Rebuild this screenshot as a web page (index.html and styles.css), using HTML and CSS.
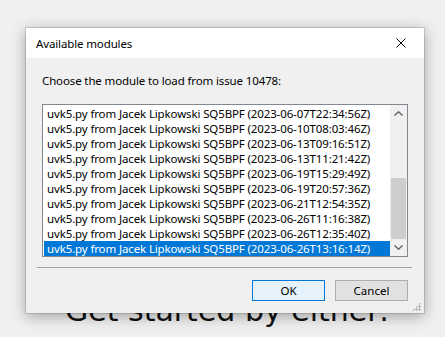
FILE: index.html
```html
<!DOCTYPE html>
<html lang="en">
<head>
    <meta charset="UTF-8">
    <title>Available modules</title>
    <link rel="stylesheet" href="styles.css">
</head>
<body>
    <div class="page">
        <p class="intro">Get started by either:</p>
    </div>

    <div class="dialog">
        <div class="titlebar">
            <span class="title">Available modules</span>
            <button class="close" aria-label="Close">
                <svg width="10" height="10" viewBox="0 0 10 10">
                    <path d="M0.5 0.5 L9.5 9.5 M9.5 0.5 L0.5 9.5" stroke="#000" stroke-width="1" fill="none"/>
                </svg>
            </button>
        </div>
        <div class="dialog-body">
            <p class="prompt">Choose the module to load from issue 10478:</p>
            <div class="listbox">
                <ul class="items">
                    <li>uvk5.py from Jacek Lipkowski SQ5BPF (2023-06-07T22:34:56Z)</li>
                    <li>uvk5.py from Jacek Lipkowski SQ5BPF (2023-06-10T08:03:46Z)</li>
                    <li>uvk5.py from Jacek Lipkowski SQ5BPF (2023-06-13T09:16:51Z)</li>
                    <li>uvk5.py from Jacek Lipkowski SQ5BPF (2023-06-13T11:21:42Z)</li>
                    <li>uvk5.py from Jacek Lipkowski SQ5BPF (2023-06-19T15:29:49Z)</li>
                    <li>uvk5.py from Jacek Lipkowski SQ5BPF (2023-06-19T20:57:36Z)</li>
                    <li>uvk5.py from Jacek Lipkowski SQ5BPF (2023-06-21T12:54:35Z)</li>
                    <li>uvk5.py from Jacek Lipkowski SQ5BPF (2023-06-26T11:16:38Z)</li>
                    <li>uvk5.py from Jacek Lipkowski SQ5BPF (2023-06-26T12:35:40Z)</li>
                    <li class="selected">uvk5.py from Jacek Lipkowski SQ5BPF (2023-06-26T13:16:14Z)</li>
                </ul>
                <div class="scrollbar">
                    <div class="arrow">
                        <svg width="9" height="5" viewBox="0 0 9 5">
                            <path d="M0.5 4.5 L4.5 0.8 L8.5 4.5" stroke="#606060" stroke-width="1.4" fill="none"/>
                        </svg>
                    </div>
                    <div class="track">
                        <div class="thumb"></div>
                    </div>
                    <div class="arrow">
                        <svg width="9" height="5" viewBox="0 0 9 5">
                            <path d="M0.5 0.5 L4.5 4.2 L8.5 0.5" stroke="#606060" stroke-width="1.4" fill="none"/>
                        </svg>
                    </div>
                </div>
            </div>
            <div class="separator"></div>
            <div class="buttons">
                <button class="btn default">OK</button>
                <button class="btn">Cancel</button>
            </div>
            <div class="grip"></div>
        </div>
    </div>
</body>
</html>
```

FILE: styles.css
```css
body {
    margin: 0;
    width: 445px;
    height: 337px;
    overflow: hidden;
    background: #f0f0f0;
    font-family: 'Noto Sans', sans-serif;
}
.page {
    padding-top: 302px;
    padding-left: 65px;
}
.intro {
    margin: 0;
    font-family: 'DejaVu Sans', sans-serif;
    font-size: 30px;
    line-height: 18px;
    color: #111;
}
.dialog {
    position: absolute;
    left: 26px;
    top: 28px;
    width: 398px;
    height: 285px;
    display: flex;
    flex-direction: column;
    background: #f0f0f0;
    box-shadow: 0 3px 14px rgba(0, 0, 0, 0.35), 0 0 0 1px rgba(0, 0, 0, 0.12);
}
.titlebar {
    height: 30px;
    background: #fff;
    display: flex;
    align-items: center;
    justify-content: space-between;
    padding-left: 10px;
}
.title {
    font-size: 11.5px;
    letter-spacing: -0.13px;
    color: #000;
}
.close {
    width: 46px;
    height: 30px;
    border: none;
    background: none;
    padding: 0;
    display: flex;
    align-items: center;
    justify-content: center;
}
.dialog-body {
    flex: 1;
    position: relative;
    padding: 15px 11px 0 16px;
}
.prompt {
    margin: 0;
    font-size: 11.5px;
    letter-spacing: -0.13px;
    line-height: 15px;
    color: #000;
}
.listbox {
    margin-top: 16px;
    width: 364px;
    height: 151px;
    border: 1px solid #828790;
    background: #fff;
    display: flex;
}
.items {
    list-style: none;
    margin: 0;
    padding: 1px 0 0 1px;
    flex: 1;
}
.items li {
    height: 15px;
    line-height: 15px;
    font-size: 11.5px;
    letter-spacing: -0.13px;
    padding-left: 3px;
    color: #000;
    white-space: nowrap;
    overflow: hidden;
}
.items li.selected {
    background: #0078d7;
    color: #fff;
}
.scrollbar {
    width: 17px;
    background: #f0f0f0;
    display: flex;
    flex-direction: column;
}
.arrow {
    height: 17px;
    display: flex;
    align-items: center;
    justify-content: center;
}
.track {
    flex: 1;
    display: flex;
    flex-direction: column;
    justify-content: flex-end;
    padding: 0 1px;
}
.thumb {
    height: 61px;
    background: #cdcdcd;
}
.separator {
    margin: 10px 0 0 -5px;
    width: 375px;
    height: 1px;
    background: #a0a0a0;
}
.buttons {
    display: flex;
    justify-content: flex-end;
    gap: 10px;
    margin-top: 12px;
    padding-right: 5px;
}
.btn {
    width: 73px;
    height: 21px;
    padding: 0;
    font-family: 'Noto Sans', sans-serif;
    font-size: 11.5px;
    color: #000;
    background: #e1e1e1;
    border: 1px solid #adadad;
}
.btn.default {
    background: #e5f1fb;
    border-color: #0078d7;
}
.grip {
    position: absolute;
    right: 3px;
    bottom: 2px;
    width: 9px;
    height: 9px;
    background:
        radial-gradient(circle, #b8b8b8 1px, transparent 1.2px) 0 0 / 3px 3px;
    clip-path: polygon(100% 0, 100% 100%, 0 100%);
}
```
